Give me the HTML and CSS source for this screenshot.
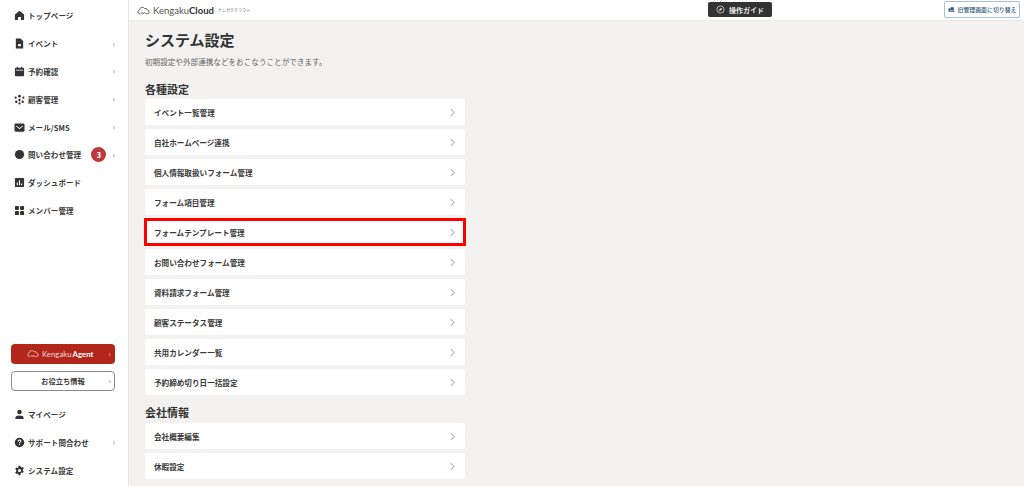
FILE: index.html
```html
<!DOCTYPE html>
<html lang="ja">
<head>
<meta charset="utf-8">
<title>システム設定</title>
<link rel="stylesheet" href="styles.css">
</head>
<body>
<div class="app">
  <aside class="sidebar">
    <nav class="nav">
      <a class="nav-item"><svg class="ni" viewBox="0 0 12 12"><path d="M6 .8 1 5v6h3.4V7.6h3.2V11H11V5z"/></svg><span class="nl">トップページ</span></a>
      <a class="nav-item"><svg class="ni" viewBox="0 0 12 12"><path fill-rule="evenodd" d="M2 .5h5.200L10 3.300V11.500H2zM4.500 6.500v2.500h3V6.500z"/></svg><span class="nl">イベント</span><i class="car">›</i></a>
      <a class="nav-item"><svg class="ni" viewBox="0 0 12 12"><path fill-rule="evenodd" d="M3 .8h1.200V2h3.600V.8H9V2h1a1 1 0 0 1 1 1v7.200a1 1 0 0 1-1 1H2a1 1 0 0 1-1-1V3a1 1 0 0 1 1-1h1zM2 4.200v.7h8v-.7z"/></svg><span class="nl">予約確認</span><i class="car">›</i></a>
      <a class="nav-item"><svg class="ni" viewBox="0 0 12 12"><circle cx="6" cy="2.400" r="1.500"/><circle cx="1.800" cy="4" r="1.200"/><circle cx="10.200" cy="4" r="1.200"/><circle cx="6" cy="6.500" r="1.300"/><circle cx="2.500" cy="8.500" r="1.300"/><circle cx="9.500" cy="8.500" r="1.300"/><circle cx="6" cy="10.300" r="1.200"/></svg><span class="nl">顧客管理</span><i class="car">›</i></a>
      <a class="nav-item"><svg class="ni" viewBox="0 0 12 12"><path fill-rule="evenodd" d="M2 1.500h8a1.500 1.500 0 0 1 1.500 1.500v6A1.500 1.500 0 0 1 10 10.500H2A1.500 1.500 0 0 1 .5 9V3A1.500 1.500 0 0 1 2 1.500zM2.800 4 6 6.500 9.200 4l.6.7L6 7.800 2.200 4.700z"/></svg><span class="nl">メール/SMS</span><i class="car">›</i></a>
      <a class="nav-item"><svg class="ni" viewBox="0 0 12 12"><circle cx="6" cy="6" r="5"/></svg><span class="nl">問い合わせ管理</span><b class="badge">3</b><i class="car">›</i></a>
      <a class="nav-item"><svg class="ni" viewBox="0 0 12 12"><path fill-rule="evenodd" d="M2 1h8a1 1 0 0 1 1 1v8a1 1 0 0 1-1 1H2a1 1 0 0 1-1-1V2a1 1 0 0 1 1-1zM3 6v3h1.200V6zm2.400-2.500V9h1.200V3.500zM7.800 7v2H9V7z"/></svg><span class="nl">ダッシュボード</span></a>
      <a class="nav-item"><svg class="ni" viewBox="0 0 12 12"><rect x="1" y="1" width="4.400" height="4.400" rx="1"/><rect x="6.600" y="1" width="4.400" height="4.400" rx="1"/><rect x="1" y="6.600" width="4.400" height="4.400" rx="1"/><rect x="6.600" y="6.600" width="4.400" height="4.400" rx="1"/></svg><span class="nl">メンバー管理</span></a>
    </nav>
    <div class="side-bottom">
      <a class="agent-btn"><svg class="cloud cloud-w" viewBox="0 0 18 11"><path d="M4.500 10H3.500a2.700 2.700 0 0 1-.3-5.300A4 4 0 0 1 10.500 2.800a3 3 0 0 1 4 2.200 2.500 2.500 0 0 1-.5 5h-1.500"/><path d="M5.500 10a1.700 1.700 0 0 1 3.300 0 1.700 1.700 0 0 1 3.300 0"/></svg><span class="agent-l">Kengaku</span><b class="agent-b">Agent</b><i class="car car-w">›</i></a>
      <a class="info-btn"><span>お役立ち情報</span><i class="car">›</i></a>
      <div class="bottom-nav">
        <a class="nav-item"><svg class="ni" viewBox="0 0 12 12"><circle cx="6" cy="3.200" r="2.500"/><path d="M1.500 11V9.500C1.500 7.800 3.500 7 6 7s4.500.8 4.500 2.500V11z"/></svg><span class="nl">マイページ</span></a>
        <a class="nav-item"><svg class="ni" viewBox="0 0 12 12"><path fill-rule="evenodd" d="M6 .8a5.200 5.200 0 1 1 0 10.400A5.200 5.200 0 0 1 6 .8zM4 4.800h1.200c0-.6.3-1 .8-1s.8.300.8.700c0 .8-1.400.9-1.400 2.300h1.200c0-1 1.500-1.200 1.500-2.400 0-1-.9-1.700-2.100-1.700S4 3.500 4 4.800zM5.400 7.600v1.200h1.200V7.600z"/></svg><span class="nl">サポート問合わせ</span><i class="car">›</i></a>
        <a class="nav-item"><svg class="ni" viewBox="0 0 12 12"><path fill-rule="evenodd" d="M5 .8h2l.3 1.500 1 .5 1.400-.6 1 1.700-1.100 1v1.200l1.100 1-1 1.700-1.400-.6-1 .5L7 11.200H5l-.3-1.500-1-.5-1.400.6-1-1.700 1.100-1V5.400l-1.100-1 1-1.700 1.400.6 1-.5zM6 4.300a1.700 1.700 0 1 0 0 3.400 1.700 1.700 0 0 0 0-3.400z"/></svg><span class="nl">システム設定</span></a>
      </div>
    </div>
  </aside>
  <div class="main">
    <header class="topbar">
      <div class="brand"><svg class="cloud" viewBox="0 0 18 11"><path d="M4.500 10H3.500a2.700 2.700 0 0 1-.3-5.300A4 4 0 0 1 10.500 2.800a3 3 0 0 1 4 2.200 2.500 2.500 0 0 1-.5 5h-1.500"/><path d="M5.500 10a1.700 1.700 0 0 1 3.300 0 1.700 1.700 0 0 1 3.300 0"/></svg><span class="brand-l">Kengaku</span><b class="brand-b">Cloud</b><span class="brand-s">ケンガククラウド</span></div>
      <a class="guide"><svg class="guide-i" viewBox="0 0 12 12"><circle cx="6" cy="6" r="4.800"/><path class="guide-n" d="M8.300 3.700 7 7 3.700 8.300 5 5z"/></svg><span>操作ガイド</span></a>
      <a class="switch"><svg class="switch-i" viewBox="0 0 12 12"><path d="M1 4h3v6H1zM4.500 2h5.500v5H4.500zM4.500 7.500H11V10H4.500z"/></svg><span>旧管理画面に切り替え</span></a>
    </header>
    <main class="content">
      <h1 class="title">システム設定</h1>
      <p class="lead">初期設定や外部連携などをおこなうことができます。</p>
      <h2 class="sec sec-first">各種設定</h2>
      <ul class="list">
        <li class="row">イベント一覧管理<svg class="chev" viewBox="0 0 6 10"><path d="M1 1l4 4-4 4"/></svg></li>
        <li class="row">自社ホームページ連携<svg class="chev" viewBox="0 0 6 10"><path d="M1 1l4 4-4 4"/></svg></li>
        <li class="row">個人情報取扱いフォーム管理<svg class="chev" viewBox="0 0 6 10"><path d="M1 1l4 4-4 4"/></svg></li>
        <li class="row">フォーム項目管理<svg class="chev" viewBox="0 0 6 10"><path d="M1 1l4 4-4 4"/></svg></li>
        <li class="row row-hl">フォームテンプレート管理<svg class="chev" viewBox="0 0 6 10"><path d="M1 1l4 4-4 4"/></svg></li>
        <li class="row">お問い合わせフォーム管理<svg class="chev" viewBox="0 0 6 10"><path d="M1 1l4 4-4 4"/></svg></li>
        <li class="row">資料請求フォーム管理<svg class="chev" viewBox="0 0 6 10"><path d="M1 1l4 4-4 4"/></svg></li>
        <li class="row">顧客ステータス管理<svg class="chev" viewBox="0 0 6 10"><path d="M1 1l4 4-4 4"/></svg></li>
        <li class="row">共用カレンダー一覧<svg class="chev" viewBox="0 0 6 10"><path d="M1 1l4 4-4 4"/></svg></li>
        <li class="row">予約締め切り日一括設定<svg class="chev" viewBox="0 0 6 10"><path d="M1 1l4 4-4 4"/></svg></li>
      </ul>
      <h2 class="sec sec-next">会社情報</h2>
      <ul class="list">
        <li class="row">会社概要編集<svg class="chev" viewBox="0 0 6 10"><path d="M1 1l4 4-4 4"/></svg></li>
        <li class="row">休暇設定<svg class="chev" viewBox="0 0 6 10"><path d="M1 1l4 4-4 4"/></svg></li>
      </ul>
    </main>
  </div>
</div>
</body>
</html>
```
FILE: styles.css
```css
* { box-sizing: border-box; }
html, body { margin: 0; height: 100%; }
body {
  font-family: "Noto Sans CJK JP", "Noto Sans", sans-serif;
  color: #333;
  background: #f3f2f0;
  overflow: hidden;
}
a { color: inherit; text-decoration: none; }
ul { list-style: none; margin: 0; padding: 0; }

.app { display: flex; height: 486px; }

.sidebar {
  width: 129px;
  flex: none;
  background: #fff;
  border-right: 1px solid #e6e5e3;
  display: flex;
  flex-direction: column;
  padding: 2px 0 2px;
}
.nav { display: flex; flex-direction: column; }
.nav-item {
  height: 27.8px;
  display: flex;
  align-items: center;
  padding: 0 13px 0 14px;
  font-size: 7.500px;
  font-weight: 700;
  letter-spacing: .1px;
  color: #3a3a3a;
}
.ni { width: 11px; height: 11px; fill: #333; flex: none; margin-right: 3px; }
.nl { flex: 1; white-space: nowrap; }
.car { font-style: normal; font-weight: 400; font-size: 8px; color: #777; line-height: 1; }
.car-w { color: #e6b6b0; position: absolute; right: 4px; }
.badge {
  width: 15px;
  height: 15px;
  border-radius: 50%;
  background: #bd3a3a;
  color: #fff;
  font-size: 7px;
  display: flex;
  align-items: center;
  justify-content: center;
  margin-right: 6px;
}

.side-bottom { margin-top: auto; display: flex; flex-direction: column; }
.agent-btn {
  position: relative;
  margin: 0 13px 0 11px;
  height: 20px;
  border-radius: 4px;
  background: #b3261c;
  color: #fff;
  display: flex;
  align-items: center;
  font-size: 7.800px;
  padding-left: 16px;
}
.cloud { width: 13px; height: 9px; fill: none; stroke: #555; stroke-width: 1.200; margin-right: 3px; }
.cloud-w { stroke: #f2d6d2; width: 12px; }
.agent-l { font-family: "Lato", sans-serif; color: #f2d6d2; }
.agent-b { font-family: "Lato", sans-serif; margin-left: 1px; }
.info-btn {
  position: relative;
  margin: 7px 13px 0 11px;
  height: 20px;
  border: 1px solid #8a8a8a;
  border-radius: 4px;
  display: flex;
  align-items: center;
  justify-content: center;
  font-size: 7.300px;
  font-weight: 700;
  color: #3a3a3a;
}
.info-btn .car { position: absolute; right: 3px; }
.bottom-nav { margin-top: 10px; display: flex; flex-direction: column; }

.main { flex: 1; min-width: 0; display: flex; flex-direction: column; }
.topbar {
  height: 21px;
  flex: none;
  background: #fff;
  border-bottom: 1px solid #ebeae8;
  display: grid;
  grid-template-columns: 571px 64px 1fr;
  align-items: center;
  padding: 0 4px 0 8px;
}
.brand { display: flex; align-items: center; font-family: "Lato", sans-serif; font-size: 9.500px; color: #555; }
.brand-b { color: #333; }
.brand-s { font-size: 4px; letter-spacing: .1px; margin-left: 4px; color: #666; font-family: "Noto Sans CJK JP", sans-serif; }
.guide {
  width: 64px;
  height: 15px;
  margin-top: -1px;
  border-radius: 2px;
  background: #333;
  color: #e8e8e8;
  display: flex;
  align-items: center;
  justify-content: center;
  font-size: 7px;
  font-weight: 700;
}
.guide-i { width: 9px; height: 9px; fill: none; stroke: #ddd; stroke-width: 1; margin-right: 4px; }
.guide-n { fill: #ddd; stroke: none; }
.switch {
  justify-self: end;
  width: 76px;
  height: 17px;
  margin-top: -1px;
  border: 1px solid #a9c0d3;
  border-radius: 2px;
  background: #fff;
  color: #2f5a78;
  display: flex;
  align-items: center;
  justify-content: center;
  font-size: 5.900px;
  font-weight: 500;
  white-space: nowrap;
}
.switch-i { width: 7px; height: 7px; fill: #2f5a78; margin-right: 3px; }

.content { padding: 0 0 0 16px; width: 336px; }
.title { margin: 5px 0 0; font-size: 15px; line-height: 27px; font-weight: 700; color: #333; }
.lead { margin: 3px 0 0; font-size: 7.600px; line-height: 12px; color: #666; }
.sec { font-size: 11px; line-height: 15px; font-weight: 700; margin: 0; color: #333; }
.sec-first { margin-top: 14px; margin-bottom: 2px; }
.sec-next { margin-top: 10px; margin-bottom: 3px; }
.list { display: flex; flex-direction: column; gap: 4px; }
.row {
  height: 26px;
  background: #fff;
  border-radius: 2px;
  display: flex;
  align-items: center;
  justify-content: space-between;
  padding: 0 10px 0 9px;
  font-size: 7.600px;
  font-weight: 700;
  color: #3a3a3a;
}
.row-hl { border-radius: 0; outline: 3px solid #f00; outline-offset: -2px; }
.chev { width: 5px; height: 9px; fill: none; stroke: #777; stroke-width: 1; }
```
